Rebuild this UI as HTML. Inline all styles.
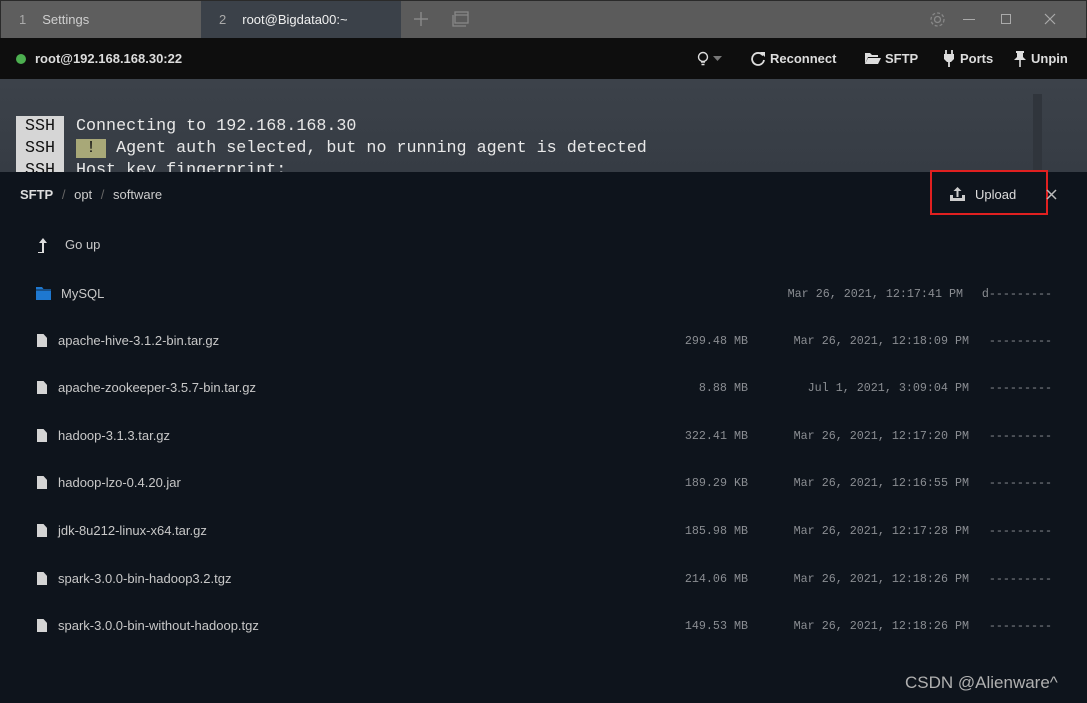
<!DOCTYPE html>
<html><head><style>
*{margin:0;padding:0;box-sizing:border-box}
body{width:1087px;height:703px;overflow:hidden;background:#0e141c;font-family:"Liberation Sans",sans-serif;position:relative}
.abs{position:absolute}
.tabbar{left:0;top:0;width:1087px;height:38px;background:#5b5b5b;border:1px solid #2a2a2a;border-bottom:none}
.tab{top:1px;height:37px;color:#cfcfcf;font-size:13px;line-height:37px}
.toolbar{left:0;top:38px;width:1087px;height:41px;background:#0e0e0e;color:#ddd;font-weight:bold;font-size:13px}
.term{left:0;top:79px;width:1087px;height:93px;background:linear-gradient(180deg,#3c424a,#363c44);overflow:hidden}
.tl{font-family:"Liberation Mono",monospace;font-size:16.7px;color:#e8e8e8;line-height:22px;white-space:pre}
.ssh{background:#d6d6d6;color:#111;display:inline-block;width:48px;text-align:center;margin-right:2px}
.panel{left:0;top:172px;width:1087px;height:531px;background:#0e141c}
.row{left:0;width:1087px;height:20px;font-size:13px;color:#c8c8c8}
.mono{font-family:"Liberation Mono",monospace;font-size:11.7px;color:#8a8d92;position:absolute;text-align:right;white-space:pre;top:3px}
.fi{position:absolute;left:37px;top:3px;width:10px;height:13px;background:#d4d4d4;clip-path:polygon(0 0,65% 0,100% 30%,100% 100%,0 100%)}
.nm{position:absolute;left:58px;top:2px}
svg{position:absolute}
</style></head><body>
<div class="abs tabbar"></div>
<div class="abs tab" style="left:1px;width:200px;background:#5e5e5e"><span style="margin-left:18px;color:#aaa">1</span><span style="margin-left:16px">Settings</span></div>
<div class="abs tab" style="left:201px;width:200px;background:#3b4149;color:#f0f0f0"><span style="margin-left:18px;color:#aaa">2</span><span style="margin-left:16px">root@Bigdata00:~</span></div>
<svg style="left:413px;top:11px" width="16" height="16"><path d="M8 1v14M1 8h14" stroke="#888" stroke-width="1.5"/></svg>
<svg style="left:452px;top:11px" width="18" height="16"><rect x="3" y="1" width="13" height="11" fill="none" stroke="#888" stroke-width="1.3"/><path d="M3 4h13M1 4v11h13" fill="none" stroke="#888" stroke-width="1.3"/></svg>
<svg style="left:929px;top:11px" width="17" height="17"><circle cx="8.5" cy="8.5" r="3" fill="none" stroke="#888" stroke-width="1.3"/><circle cx="8.5" cy="8.5" r="6.5" fill="none" stroke="#888" stroke-width="1.3" stroke-dasharray="3 2"/></svg>
<div class="abs" style="left:963px;top:19px;width:12px;height:1px;background:#aaa"></div>
<div class="abs" style="left:1001px;top:14px;width:10px;height:10px;border:1px solid #aaa"></div>
<svg style="left:1044px;top:13px" width="12" height="12"><path d="M1 1l10 10M11 1L1 11" stroke="#aaa" stroke-width="1.2"/></svg>

<div class="abs toolbar">
<div class="abs" style="left:16px;top:16px;width:10px;height:10px;border-radius:50%;background:#4caf50"></div>
<div class="abs" style="left:35px;top:13px">root@192.168.168.30:22</div>
<svg style="left:697px;top:13px" width="12" height="16"><circle cx="6" cy="6" r="4.5" fill="none" stroke="#ddd" stroke-width="1.4"/><path d="M4 11h4M4.5 13.5h3" stroke="#ddd" stroke-width="1.4"/></svg>
<svg style="left:713px;top:18px" width="9" height="6"><path d="M0 0h9L4.5 5z" fill="#777"/></svg>
<svg style="left:751px;top:13px" width="15" height="15"><path d="M12 4.5A6 6 0 1 0 13 9" fill="none" stroke="#ddd" stroke-width="1.8"/><path d="M9 1h5v5z" fill="#ddd"/></svg>
<div class="abs" style="left:770px;top:13px">Reconnect</div>
<svg style="left:864px;top:13px" width="17" height="14"><path d="M1 2h5l2 2h6v2H4L1 13z" fill="#ddd"/><path d="M4 7h13l-3 6H1z" fill="#ddd"/></svg>
<div class="abs" style="left:885px;top:13px">SFTP</div>
<svg style="left:943px;top:12px" width="12" height="17"><path d="M3 0v4M9 0v4" stroke="#ddd" stroke-width="1.8"/><path d="M1 4h10v5l-3 3H4L1 9z" fill="#ddd"/><path d="M6 12v5" stroke="#ddd" stroke-width="1.8"/></svg>
<div class="abs" style="left:960px;top:13px">Ports</div>
<svg style="left:1014px;top:12px" width="12" height="17"><path d="M2 1h8v2H9v4l3 3H0l3-3V3H2z" fill="#ddd"/><path d="M6 10v7" stroke="#ddd" stroke-width="1.6"/></svg>
<div class="abs" style="left:1031px;top:13px">Unpin</div>
</div>

<div class="abs term">
<div class="abs" style="left:1033px;top:15px;width:9px;height:80px;background:#30353c"></div>
<div class="abs tl" style="left:16px;top:37px"><span class="ssh">SSH</span> Connecting to 192.168.168.30
<span class="ssh">SSH</span> <span style="background:#a8a878;color:#111"> ! </span> Agent auth selected, but no running agent is detected
<span class="ssh">SSH</span> Host key fingerprint:</div>
</div>

<div class="abs panel">
<div class="abs" style="left:20px;top:15px;font-size:13px;color:#ccc"><b style="color:#ddd">SFTP</b> <span style="color:#666;margin:0 5px">/</span> opt <span style="color:#666;margin:0 5px">/</span> software</div>
<div class="abs" style="left:930px;top:-2px;width:118px;height:45px;border:2px solid #e02020"></div>
<svg style="left:950px;top:14px" width="15" height="15"><path d="M7.5 1L3.5 5h3v6h2V5h3z" fill="#ccc"/><path d="M0 9h3v3h9V9h3v6H0z" fill="#ccc"/></svg>
<div class="abs" style="left:975px;top:15px;color:#ddd;font-size:13px">Upload</div>
<svg style="left:1046px;top:17px" width="11" height="11"><path d="M1 1l9 9M10 1L1 10" stroke="#bbb" stroke-width="1.5"/></svg>

<div class="abs row" style="top:63px"><svg style="left:37px;top:2px" width="12" height="16"><path d="M6 1L2 6h3v9H1v1h6V6h3z" fill="#ddd"/></svg><span class="nm" style="left:65px">Go up</span></div>
<div class="abs row" style="top:112px"><svg style="left:36px;top:3px" width="15" height="13"><path d="M0 0h6l1.5 2H15v11H0z" fill="#1e78d0"/><path d="M0 3h15" stroke="#0e141c" stroke-width="0.8"/></svg><span class="nm" style="left:61px">MySQL</span><span class="mono" style="right:124px">Mar 26, 2021, 12:17:41 PM</span><span class="mono" style="right:35px">d---------</span></div>
<div class="abs row" style="top:159px"><span class="fi"></span><span class="nm">apache-hive-3.1.2-bin.tar.gz</span><span class="mono" style="right:339px">299.48 MB</span><span class="mono" style="right:118px">Mar 26, 2021, 12:18:09 PM</span><span class="mono" style="right:35px">---------</span></div>
<div class="abs row" style="top:206px"><span class="fi"></span><span class="nm">apache-zookeeper-3.5.7-bin.tar.gz</span><span class="mono" style="right:339px">8.88 MB</span><span class="mono" style="right:118px">Jul 1, 2021, 3:09:04 PM</span><span class="mono" style="right:35px">---------</span></div>
<div class="abs row" style="top:254px"><span class="fi"></span><span class="nm">hadoop-3.1.3.tar.gz</span><span class="mono" style="right:339px">322.41 MB</span><span class="mono" style="right:118px">Mar 26, 2021, 12:17:20 PM</span><span class="mono" style="right:35px">---------</span></div>
<div class="abs row" style="top:301px"><span class="fi"></span><span class="nm">hadoop-lzo-0.4.20.jar</span><span class="mono" style="right:339px">189.29 KB</span><span class="mono" style="right:118px">Mar 26, 2021, 12:16:55 PM</span><span class="mono" style="right:35px">---------</span></div>
<div class="abs row" style="top:349px"><span class="fi"></span><span class="nm">jdk-8u212-linux-x64.tar.gz</span><span class="mono" style="right:339px">185.98 MB</span><span class="mono" style="right:118px">Mar 26, 2021, 12:17:28 PM</span><span class="mono" style="right:35px">---------</span></div>
<div class="abs row" style="top:397px"><span class="fi"></span><span class="nm">spark-3.0.0-bin-hadoop3.2.tgz</span><span class="mono" style="right:339px">214.06 MB</span><span class="mono" style="right:118px">Mar 26, 2021, 12:18:26 PM</span><span class="mono" style="right:35px">---------</span></div>
<div class="abs row" style="top:444px"><span class="fi"></span><span class="nm">spark-3.0.0-bin-without-hadoop.tgz</span><span class="mono" style="right:339px">149.53 MB</span><span class="mono" style="right:118px">Mar 26, 2021, 12:18:26 PM</span><span class="mono" style="right:35px">---------</span></div>

<div class="abs" style="left:905px;top:501px;color:#b0b0b0;font-size:17px">CSDN @Alienware^</div>
</div>
</body></html>
